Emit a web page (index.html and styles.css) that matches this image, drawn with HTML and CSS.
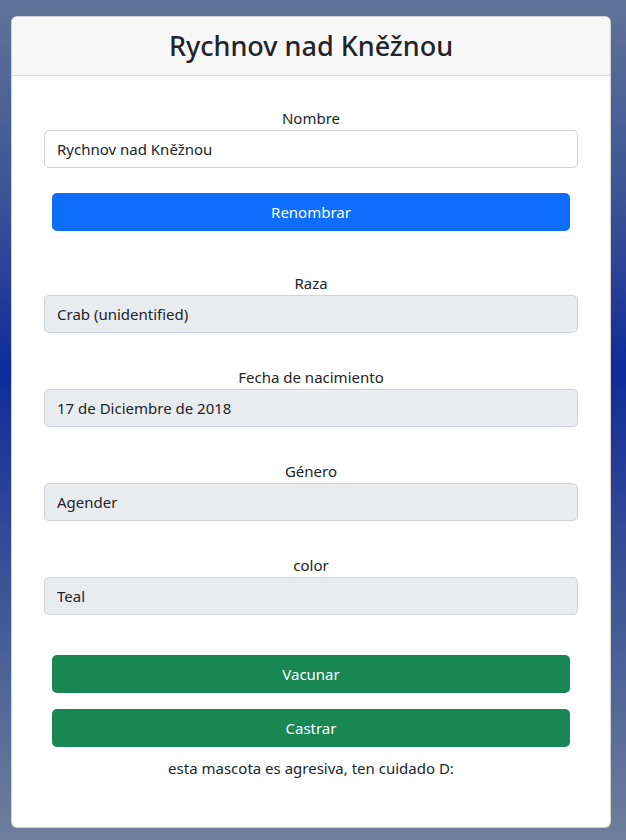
FILE: index.html
```html
<!DOCTYPE html>
<html lang="es">
<head>
<meta charset="utf-8">
<title>Rychnov nad Kněžnou</title>
<link rel="stylesheet" href="styles.css">
</head>
<body>
<div class="card">
  <div class="card-header"><h3 class="title">Rychnov nad Kněžnou</h3></div>
  <div class="card-body">
    <div class="field field-first">
      <label class="label">Nombre</label>
      <input class="input" type="text" value="Rychnov nad Kněžnou">
    </div>
    <button class="btn btn-primary first-btn">Renombrar</button>
    <div class="field">
      <label class="label">Raza</label>
      <input class="input" type="text" value="Crab (unidentified)" disabled>
    </div>
    <div class="field">
      <label class="label">Fecha de nacimiento</label>
      <input class="input" type="text" value="17 de Diciembre de 2018" disabled>
    </div>
    <div class="field">
      <label class="label">Género</label>
      <input class="input" type="text" value="Agender" disabled>
    </div>
    <div class="field">
      <label class="label">color</label>
      <input class="input" type="text" value="Teal" disabled>
    </div>
    <div class="actions">
      <button class="btn btn-success">Vacunar</button>
      <button class="btn btn-success">Castrar</button>
    </div>
    <p class="warning">esta mascota es agresiva, ten cuidado D:</p>
  </div>
</div>
</body>
</html>
```
FILE: styles.css
```css
* { box-sizing: border-box; }
html, body { height: 100%; }
body {
  margin: 0;
  padding: 16px 15px 12px 11px;
  font-family: "Noto Sans", "Open Sans", sans-serif;
  font-size: 16px;
  line-height: 24px;
  color: #212529;
  background: linear-gradient(180deg, #5f7397 0%, #3a5196 25%, #0f2a9a 44%, #3a5196 68%, #6d7f9b 100%);
}
.card {
  width: 600px;
  height: 812px;
  background: #fff;
  border: 1px solid rgba(0,0,0,0.18);
  border-radius: 6px;
  overflow: hidden;
}
.card-header {
  background: #f7f7f7;
  border-bottom: 1px solid #dcdcdc;
  height: 59px;
  display: flex;
  align-items: center;
  justify-content: center;
}
.title {
  margin: 0 0 1px;
  font-size: 27px;
  font-weight: 500;
  line-height: 32px;
  color: #212529;
}
.card-body {
  padding: 30px 32px 0 32px;
  display: flex;
  flex-direction: column;
}
.field {
  display: flex;
  flex-direction: column;
  align-items: stretch;
  margin-bottom: 32px;
}
.field-first { margin-bottom: 0; }
.label {
  text-align: center;
  font-size: 15px;
  line-height: 24px;
}
.input {
  height: 38px;
  border: 1px solid #ced4da;
  border-radius: 5px;
  padding: 6px 12px;
  font-family: inherit;
  font-size: 15px;
  color: #212529;
  background: #fff;
}
.input:disabled { background: #e9ecef; opacity: 1; }
.btn {
  height: 38px;
  margin: 0 8px;
  border: none;
  border-radius: 5px;
  font-family: inherit;
  font-size: 15px;
  color: #fff;
}
.btn-primary { background: #0d6efd; }
.btn-success { background: #198754; }
.first-btn { margin-top: 25px; margin-bottom: 40px; }
.actions { display: flex; flex-direction: column; gap: 16px; margin-top: 8px; }
.warning { margin: 9px 0 0; text-align: center; font-size: 15px; }
```
